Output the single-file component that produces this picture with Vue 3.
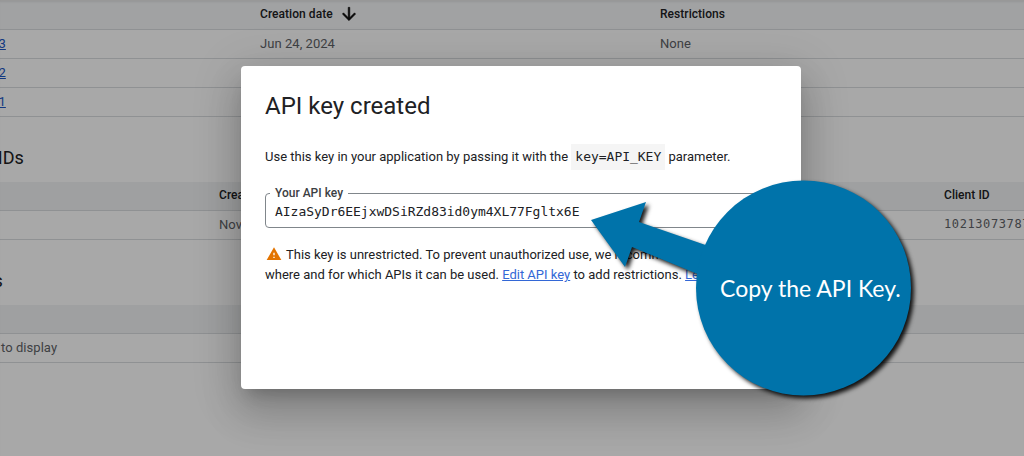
<template>
  <div class="screen">
    <!-- page behind the dialog, scrolled sideways so the first column is cut off -->
    <main class="page">
      <section class="table keys">
        <div class="row head">
          <span>Name</span>
          <span class="sorted">Creation date
            <svg class="sort" viewBox="0 0 24 24" width="20" height="20"><path d="M20 12l-1.41-1.41L13 16.17V4h-2v12.17l-5.58-5.59L4 12l8 8 8-8z" /></svg>
          </span>
          <span>Restrictions</span>
        </div>
        <div v-for="k in apiKeys" :key="k.name" class="row">
          <a href="#" class="link">{{ k.name }}</a>
          <span>{{ k.date }}</span>
          <span>{{ k.restrictions }}</span>
        </div>
      </section>

      <h2 class="title">OAuth 2.0 Client IDs</h2>
      <section class="table oauth">
        <div class="row head">
          <span>Name</span>
          <span>Creation date</span>
          <span>Client ID</span>
        </div>
        <div class="row">
          <a href="#" class="link">Web</a>
          <span>Nov 12, 2023</span>
          <span class="mono">102130737871-abc</span>
        </div>
      </section>

      <h2 class="title service">Service Accounts</h2>
      <section class="table">
        <div class="row head"><span>Email</span></div>
        <div class="row empty"><span>No service accounts to display</span></div>
      </section>
    </main>

    <div class="backdrop"></div>

    <div class="dialog">
      <h1>API key created</h1>
      <p class="usage">
        Use this key in your application by passing it with the
        <code>key=API_KEY</code> parameter.
      </p>
      <fieldset class="field">
        <legend>Your API key</legend>
        <span class="value">AIzaSyDr6EEjxwDSiRZd83id0ym4XL77Fgltx6E</span>
      </fieldset>
      <p class="warn">
        <svg class="warn-icon" viewBox="0 0 24 24" width="16" height="16"><path d="M1 21h22L12 2 1 21zm12-3h-2v-2h2v2zm0-4h-2v-4h2v4z" /></svg>
        This key is unrestricted. To prevent unauthorized use, we recommend restricting
        where and for which APIs it can be used. <a href="#">Edit API key</a> to add restrictions. <a href="#">Learn more</a>
      </p>
    </div>

    <svg class="callout" viewBox="0 0 1024 456" width="1024" height="456">
      <g class="bubble">
        <polygon points="591,220 646,202 639,222 720,250 700,275 632,247 625,267" />
        <circle cx="803.5" cy="288" r="107.5" />
      </g>
      <text x="720" y="297">Copy the API Key.</text>
    </svg>
  </div>
</template>

<script setup>
const apiKeys = [
  { name: 'API key 3', date: 'Jun 24, 2024', restrictions: 'None' },
  { name: 'API key 2', date: 'Jun 24, 2024', restrictions: 'None' },
  { name: 'API key 1', date: 'Jun 24, 2024', restrictions: 'None' }
]
</script>

<style>
html, body { margin: 0; overflow: hidden; }
</style>

<style scoped>
.screen {
  position: relative;
  width: 1024px;
  height: 456px;
  overflow: hidden;
  background: #fff;
  font-family: Roboto, "Liberation Sans", sans-serif;
  color: #202124;
}
.page {
  width: 1400px;
  margin-left: -200px;
  padding-top: 1px;
}
.row {
  display: grid;
  align-items: center;
  box-sizing: border-box;
  height: 29px;
  padding: 0 0 2px 152px;
  border-bottom: 1px solid #dadce0;
  font-size: 13px;
  letter-spacing: 0.05px;
  color: #5f6368;
  white-space: nowrap;
}
.keys .row { grid-template-columns: 308px 400px 1fr; }
.oauth .row { grid-template-columns: 267px 725px 1fr; }
.head {
  background: #f1f3f4;
  color: #202124;
  font-size: 12px;
  font-weight: 500;
}
.keys .head { background: #f5f6f7; }
.sorted { display: flex; align-items: center; gap: 6px; }
.sort { fill: #111; stroke: #111; stroke-width: 0.6; }
.link { color: #1a56c4; text-decoration: underline; }
.mono {
  font-family: "DejaVu Sans Mono", monospace;
  font-size: 12px;
  letter-spacing: 0.6px;
}
.row.empty { padding-left: 64px; }
.empty span { margin-left: 15px; }
.title {
  box-sizing: border-box;
  height: 65px;
  margin: 0;
  padding: 30px 0 0 64px;
  font-size: 18px;
  font-weight: 400;
  line-height: 22px;
  white-space: nowrap;
}
.title.service { padding-left: 64px; }
.backdrop {
  position: absolute;
  inset: 0;
  background: rgba(0, 0, 0, 0.34);
  box-shadow: inset 0 3px 3px -2px rgba(0, 0, 0, 0.15);
}
.dialog {
  position: absolute;
  left: 241px;
  top: 66px;
  box-sizing: border-box;
  width: 560px;
  height: 323px;
  padding: 24px;
  background: #fff;
  border-radius: 4px;
  box-shadow: 0 11px 15px -7px rgba(0, 0, 0, 0.2), 0 24px 38px 3px rgba(0, 0, 0, 0.14), 0 9px 46px 8px rgba(0, 0, 0, 0.12);
}
h1 {
  margin: 0 0 22px;
  font-size: 24px;
  font-weight: 400;
  line-height: 32px;
}
.usage {
  margin: 0 0 23px;
  font-size: 13px;
  line-height: 26px;
}
code {
  display: inline-block;
  padding: 0 4px;
  background: #f5f5f5;
  font-family: "DejaVu Sans Mono", monospace;
  font-size: 13px;
  letter-spacing: -0.02px;
}
.field {
  box-sizing: border-box;
  height: 41px;
  margin: -6px 0 0;
  padding: 0 9px;
  border: 1px solid #80868b;
  border-radius: 4px;
}
legend {
  padding: 0 5px;
  margin-left: -5px;
  font-size: 12px;
  font-weight: 500;
  line-height: 12px;
  color: #3c4043;
}
.value {
  display: block;
  margin-top: 3px;
  font-family: "DejaVu Sans Mono", monospace;
  font-size: 13px;
  letter-spacing: -0.02px;
  line-height: 20px;
}
.warn {
  margin: 17px 0 0;
  font-size: 13px;
  line-height: 20px;
}
.warn a { color: #3367d6; text-decoration: underline; }
.warn-icon { fill: #e37400; vertical-align: -3px; margin: 0 1px; }
.callout { position: absolute; left: 0; top: 0; }
.bubble { fill: #0073aa; filter: drop-shadow(3px 3px 2px rgba(0, 0, 0, 0.9)); }
.callout text {
  font-family: Lato, "Open Sans", sans-serif;
  font-size: 23px;
  fill: #fff;
}
</style>
